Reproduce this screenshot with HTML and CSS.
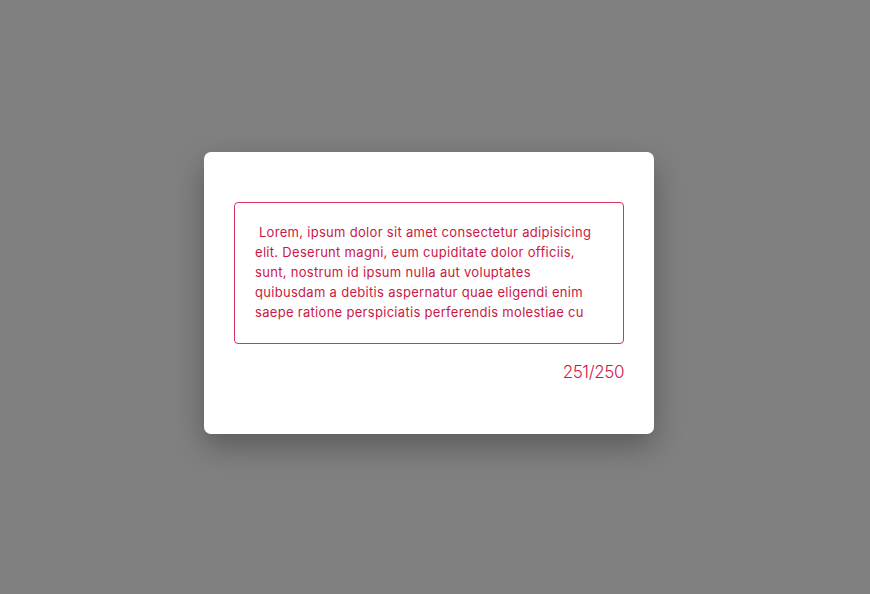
FILE: index.html
```html
<!DOCTYPE html>
<html lang="en">
<head>
    <meta charset="UTF-8">
    <meta name="viewport" content="width=device-width, initial-scale=1.0">
    <title>Character counter</title>
    <link rel="stylesheet" href="styles.css">
</head>
<body>
    <div class="overlay">
        <div class="modal">
            <div class="textbox">
                <span class="line">&nbsp;Lorem, ipsum dolor sit amet consectetur adipisicing</span>
                <span class="line">elit. Deserunt magni, eum cupiditate dolor officiis,</span>
                <span class="line">sunt, nostrum id ipsum nulla aut voluptates</span>
                <span class="line">quibusdam a debitis aspernatur quae eligendi enim</span>
                <span class="line">saepe ratione perspiciatis perferendis molestiae cu</span>
            </div>
            <div class="counter">251/250</div>
        </div>
    </div>
</body>
</html>
```

FILE: styles.css
```css
* {
    margin: 0;
    padding: 0;
    box-sizing: border-box;
}

body {
    font-family: 'Inter', 'Liberation Sans', sans-serif;
    background: #808080;
    min-height: 100vh;
}

.overlay {
    height: 594px;
    display: flex;
    align-items: center;
    justify-content: center;
    padding-right: 12px;
    padding-bottom: 8px;
}

.modal {
    width: 450px;
    background: white;
    border-radius: 7px;
    padding: 50px 30px;
    box-shadow: 0 12px 30px rgba(0,0,0,0.3);
}

.textbox {
    height: 142px;
    border: 1px solid #d6345c;
    border-radius: 4px;
    padding: 19px 20px 20px;
    color: #cc1744;
    font-size: 13px;
    letter-spacing: 0.3px;
    line-height: 20px;
    overflow: hidden;
}

.line {
    display: block;
    white-space: nowrap;
}

.counter {
    margin-top: 16px;
    text-align: right;
    color: #cc1744;
    font-size: 17px;
    font-weight: 300;
    letter-spacing: -0.4px;
    line-height: 24px;
}
```
